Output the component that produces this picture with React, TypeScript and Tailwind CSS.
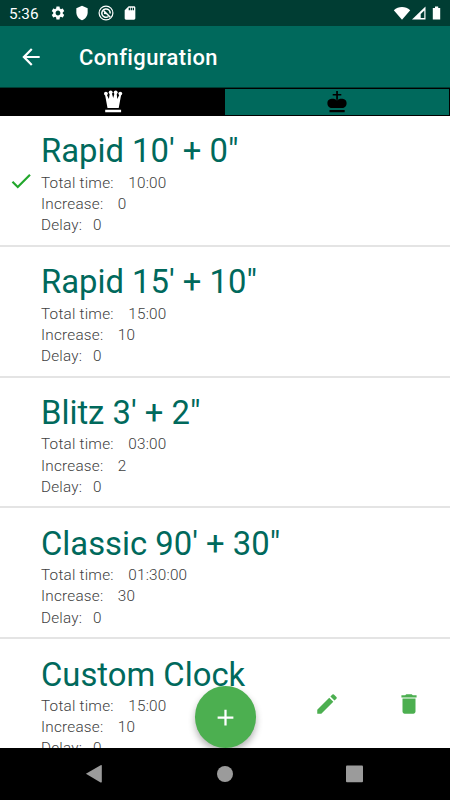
import { MdArrowBack, MdCheck, MdSettings, MdSdCard, MdEdit, MdDelete, MdAdd } from "react-icons/md";

type Clock = {
  name: string;
  total: string;
  increase: string;
  delay: string;
  selected?: boolean;
  custom?: boolean;
};

const clocks: Clock[] = [
  { name: `Rapid 10' + 0"`, total: "10:00", increase: "0", delay: "0", selected: true },
  { name: `Rapid 15' + 10"`, total: "15:00", increase: "10", delay: "0" },
  { name: `Blitz 3' + 2"`, total: "03:00", increase: "2", delay: "0" },
  { name: `Classic 90' + 30"`, total: "01:30:00", increase: "30", delay: "0" },
  { name: "Custom Clock", total: "15:00", increase: "10", delay: "0", custom: true },
];

function StatusBar() {
  return (
    <div className="flex h-[26px] shrink-0 items-center bg-[#003d33] pl-[9px] pr-[4px] text-white">
      <span className="w-[41px] pt-[2px] text-[15.3px] leading-[26px]">5:36</span>
      <MdSettings className="h-4 w-4" />
      <svg viewBox="0 0 24 24" className="ml-2 h-4 w-4" fill="currentColor">
        <path d="M12 1 3.500 5v6c0 5.500 3.500 10.200 8.500 12 5-1.800 8.500-6.500 8.500-12V5z" />
      </svg>
      <svg viewBox="0 0 16 16" className="ml-2 h-4 w-4" fill="none" stroke="currentColor">
        <circle cx="8" cy="8" r="6.900" strokeWidth="1.200" />
        <path d="M10.500 11.500A4.200 4.200 0 1 1 12.200 8.500" strokeWidth="1.500" />
        <path d="m5.500 5.500 6.800 6.800M6 8.300 8.500 8.600" strokeWidth="1.500" />
      </svg>
      <MdSdCard className="ml-2 h-4 w-4" />
      <svg viewBox="0 0 50 16" className="ml-auto h-4 w-[50px] overflow-visible" fill="currentColor">
        <path d="M-2.200 5.200C2.500 1 9.500 1 14.200 5.200L6 14.700z" />
        <path d="M29.500 1.500v13H16z" />
        <path d="M28.300 5.500v7.500h-3.600V9z" fill="#003d33" />
        <path d="M39 1.500h3.200V3h2v11.500h-7.400V3H39z" />
      </svg>
    </div>
  );
}

function Header() {
  return (
    <header className="flex h-[61px] shrink-0 items-center bg-[#00695c] pl-[18px] text-white">
      <MdArrowBack className="h-[26px] w-[26px]" />
      <h1 className="ml-[35px] pt-[2px] text-[21.900px] font-medium leading-[26px] tracking-[0.42px]">Configuration</h1>
    </header>
  );
}

function Tabs() {
  return (
    <div className="flex h-[29px] shrink-0 border-t border-[#003d33] bg-black">
      <div className="flex w-1/2 justify-center bg-black pt-[2px] text-white">
        <svg viewBox="0 0 20 24" className="h-6 w-5" fill="currentColor">
          <circle cx="2.900" cy="3.600" r="1.900" />
          <circle cx="7.700" cy="2.300" r="1.900" />
          <circle cx="12.700" cy="2.300" r="1.900" />
          <circle cx="17.300" cy="3.600" r="1.900" />
          <path d="m2 4.500 2.500 13.500h11.200l2.500-13.500h-1.700l-2.200 4.500L13.600 3h-2L10.200 8 8.800 3H6.800l-.9 6-2.200-4.500zM2.200 19.800h15.900v2.500H2.200z" />
        </svg>
      </div>
      <div className="flex w-1/2 justify-center border-t border-r border-b border-black bg-[#00695c] pt-[2px] text-black">
        <svg viewBox="0 0 20 24" className="h-6 w-5" fill="currentColor">
          <path d="M9.200 0h1.700v3h3.400v1.600h-3.400v4.200H9.200V4.600H5.700V3h3.500zM10 9.500C7.800 7 .4 7 .4 12c0 3.500 2 5 4.500 5h10.200c2.500 0 4.500-1.500 4.500-5 0-5-7.400-5-9.600-2.500zM2.500 19h15.200v2.200H2.500z" />
        </svg>
      </div>
    </div>
  );
}

function ClockRow({ clock }: { clock: Clock }) {
  return (
    <li className="flex h-[130.830px] shrink-0 border-b-2 border-[#e4e4e4]">
      <div className="flex w-[41px] items-center pl-[7.500px] pt-[2px]">
        {clock.selected && <MdCheck className="h-[26px] w-[26px] text-[#22a72c]" />}
      </div>
      <div className="flex-1 pt-[15.200px]">
        <h2 className="text-[32.800px] leading-[40px] text-[#00695c]">{clock.name}</h2>
        <div className="pt-[1.500px] text-[15.300px] font-light leading-[21.200px] tracking-[0.22px] text-[#404040]">
          <p className="flex gap-[14.500px]"><span>Total time:</span><span>{clock.total}</span></p>
          <p className="flex gap-[14.500px]"><span>Increase:</span><span>{clock.increase}</span></p>
          <p className="flex gap-[10.800px]"><span>Delay:</span><span>{clock.delay}</span></p>
        </div>
      </div>
      {clock.custom && (
        <div className="flex items-center gap-14 pr-[28px] pt-[1px] text-[#4caf50]">
          <MdEdit className="h-[26px] w-[26px]" />
          <MdDelete className="h-[26px] w-[26px]" />
        </div>
      )}
    </li>
  );
}

function NavBar() {
  return (
    <nav className="flex h-[52px] shrink-0 items-center justify-center bg-black">
      <svg viewBox="0 0 280 20" className="h-5 w-[280px]" fill="#9b9b9b">
        <path d="M.9 9.700 15.600 1.200q1.200-.6 1.200.6v16q0 1.200-1.200.6z" />
        <circle cx="140" cy="10" r="8" />
        <rect x="261" y="1.500" width="17" height="16.800" rx="1" />
      </svg>
    </nav>
  );
}

export default function App() {
  return (
    <div className="flex h-[800px] w-[450px] flex-col overflow-hidden bg-white font-[Roboto,sans-serif]">
      <StatusBar />
      <Header />
      <Tabs />
      <main className="relative min-h-0 flex-1">
        <ul className="flex h-full flex-col overflow-hidden">
          {clocks.map((clock) => (
            <ClockRow key={clock.name} clock={clock} />
          ))}
        </ul>
        <button className="absolute bottom-[0.400px] left-[194.500px] flex h-[61.200px] w-[61.200px] items-center justify-center rounded-full bg-[#4caf50] text-white shadow-[0_4px_7px_rgba(0,0,0,0.3)]">
          <MdAdd className="h-[27px] w-[27px]" />
        </button>
      </main>
      <NavBar />
    </div>
  );
}
